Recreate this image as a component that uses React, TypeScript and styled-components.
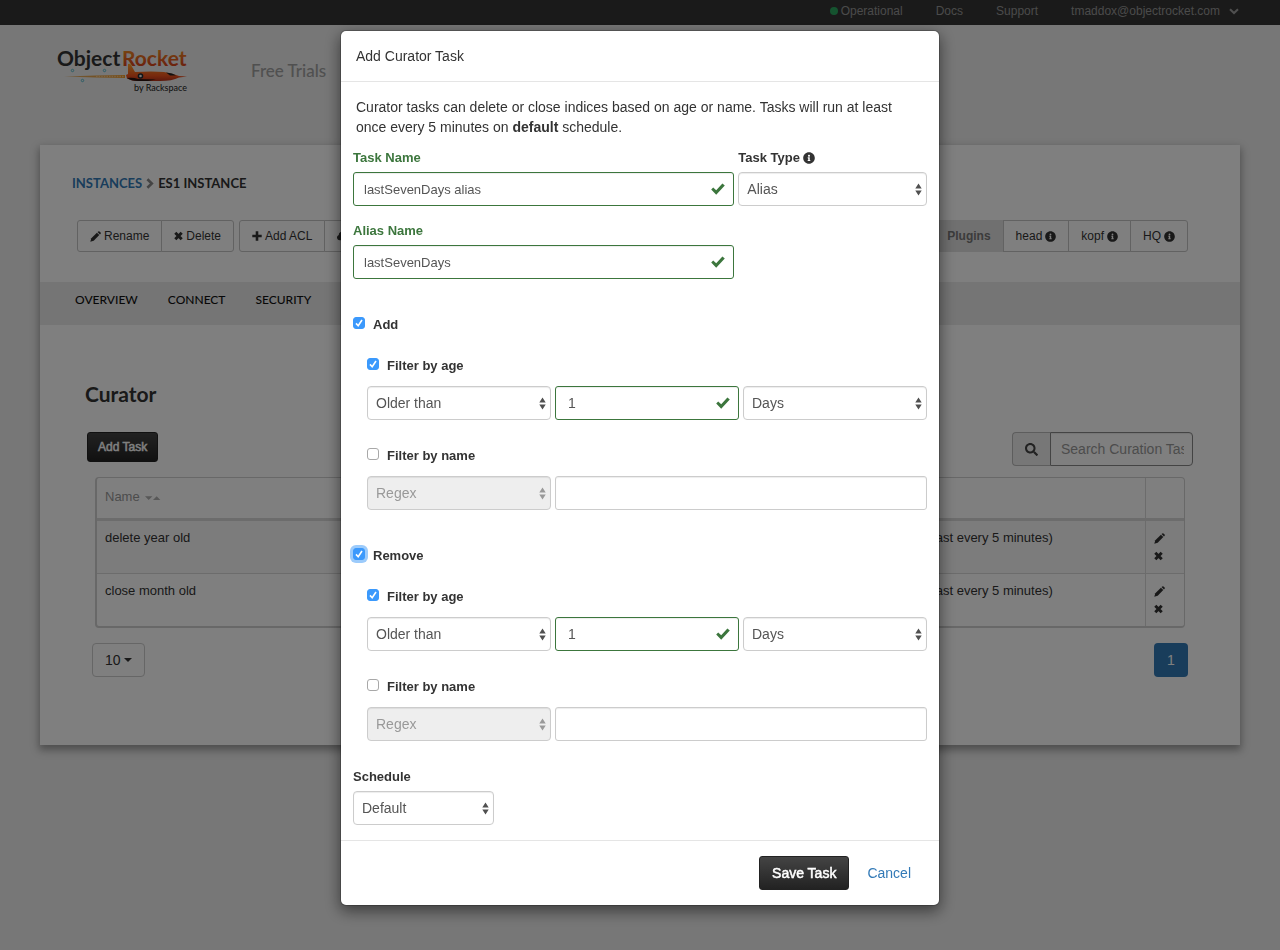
import React, { useId, useState } from "react";
import styled, { createGlobalStyle, css } from "styled-components";
import { FaCloud, FaInfoCircle, FaSearch } from "react-icons/fa";

const sans = `"Liberation Sans", Arial, Helvetica, sans-serif`;
const display = `Lato, "Noto Sans", sans-serif`;
const green = "#3c763d";

const GlobalStyle = createGlobalStyle`
  *, *::before, *::after { box-sizing: border-box; }
  html { background: #eeeeee; }
  body {
    margin: 0;
    font-family: ${sans};
    font-size: 14px;
    line-height: 20px;
    color: #333;
  }
  button, input, select { font-family: inherit; }
`;

/* ---------- Icons ---------- */

const OkIcon = () => (
  <svg width="14" height="12" viewBox="0 0 14 12" fill="currentColor" aria-hidden="true">
    <path d="M0.2 6.6 2.2 4.6 5.2 7.2 11.4 0.4 13.8 2.6 5.2 11.8Z" />
  </svg>
);

const PencilIcon = () => (
  <svg width="11" height="11" viewBox="0 0 11 11" fill="currentColor" aria-hidden="true">
    <path d="M6.9 1.7 9.3 4.1 3.7 9.7 0.3 10.7 1.3 7.3Z" />
    <path d="M7.5 1.100 8.300 0.400Q8.900 0 9.500 0.400L10.600 1.500Q11 2.100 10.700 2.700L9.900 3.500Z" />
  </svg>
);

const RemoveIcon = () => (
  <svg width="9" height="10" viewBox="0 0 9 10" aria-hidden="true">
    <path d="M1.300 1.800 7.700 8.200M7.700 1.800 1.300 8.200" stroke="currentColor" strokeWidth="3" />
  </svg>
);

const PlusIcon = () => (
  <svg width="10" height="10" viewBox="0 0 10 10" aria-hidden="true">
    <path d="M5 0.3V9.7M0.3 5H9.7" stroke="currentColor" strokeWidth="2.6" />
  </svg>
);

const ChevronRight = () => (
  <svg width="8" height="11" viewBox="0 0 8 11" fill="none" aria-hidden="true">
    <path d="M1.4 1.2 5.8 5.5 1.4 9.8" stroke="#888" strokeWidth="2.6" />
  </svg>
);

const ChevronDown = () => (
  <svg width="10" height="7" viewBox="0 0 10 7" fill="none" aria-hidden="true">
    <path d="M1 1.2 5 5 9 1.2" stroke="#a0a0a0" strokeWidth="2" />
  </svg>
);

const UpDown = () => (
  <svg width="7" height="13" viewBox="0 0 7 13" fill="currentColor" aria-hidden="true">
    <path d="M3.5 0.4 6.7 5.4H0.3ZM3.5 12.6 0.3 7.6H6.7Z" />
  </svg>
);

const SortIcon = () => (
  <svg width="18" height="6" viewBox="-2 0 18 6" fill="#b0b0b0" aria-hidden="true">
    <path d="M0 1.2H7.4L3.7 5ZM8 5H15.4L11.7 1.2Z" />
  </svg>
);

const Caret = () => (
  <svg width="8" height="4" viewBox="0 0 8 4" fill="currentColor" aria-hidden="true">
    <path d="M0 0H8L4 4Z" />
  </svg>
);

const Logo = () => (
  <svg width="140" height="56" viewBox="0 -6 140 56" role="img" aria-label="ObjectRocket by Rackspace">
    <defs>
      <linearGradient id="word" x1="0" y1="0" x2="0" y2="1">
        <stop offset="0.2" stopColor="#f08a24" />
        <stop offset="0.8" stopColor="#d9481c" />
      </linearGradient>
      <linearGradient id="hull" x1="0" y1="0" x2="0" y2="1">
        <stop offset="0" stopColor="#ffa62e" />
        <stop offset="0.7" stopColor="#f0521c" />
        <stop offset="1" stopColor="#b8321a" />
      </linearGradient>
      <linearGradient id="flame" x1="0" y1="0" x2="1" y2="0">
        <stop offset="0" stopColor="#d98a20" stopOpacity="0.6" />
        <stop offset="1" stopColor="#f29a26" />
      </linearGradient>
    </defs>
    <text x="1" y="20" fontFamily={display} fontSize="21" fontWeight="700" fill="#333">
      Object
    </text>
    <text x="66" y="20" fontFamily={display} fontSize="21" fontWeight="700" fill="url(#word)">
      Rocket
    </text>
    <path d="M8 30.500 40 29.500 69 29V32L40 31.500Z" fill="url(#flame)" />
    <path d="M40 30.500H68" stroke="#f6c98b" strokeWidth="1.4" strokeDasharray="1.6 1" />
    <path
      d="M72 18Q74 17 75 19L79 26Q96 25 108 26Q118 28 123 30L131 30.500 123 31.500Q116 35 104 35H82Q76 35 71 32.500L70 29 72 28Z"
      fill="url(#hull)"
    />
    <path d="M110 26.500Q117 27 120 29.500H114Z" fill="#222" />
    <path d="M71 32Q77 31 82 33L100 33.500 92 35H82Q75 35 71 32Z" fill="#2b1510" />
    <circle cx="84.500" cy="30" r="2.800" fill="#1d2b33" />
    <circle cx="84.500" cy="30" r="1.300" fill="#f3efe6" />
    <g fill="none" stroke="#4bb6c9" strokeWidth="0.900">
      <circle cx="16.500" cy="24.500" r="1.200" />
      <circle cx="48.500" cy="24.500" r="1.200" />
      <circle cx="26.500" cy="34.500" r="1.200" />
    </g>
    <text x="131" y="45" textAnchor="end" fontFamily={display} fontSize="9" fill="#222">
      by Rackspace
    </text>
  </svg>
);

/* ---------- Page behind the dialog ---------- */

const TopBar = styled.nav`
  display: flex;
  justify-content: flex-end;
  gap: 33px;
  height: 25px;
  padding: 1px 41px 0 0;
  background: #353535;
`;

const TopLink = styled.a`
  display: flex;
  align-items: center;
  gap: 3px;
  height: 20px;
  font-size: 12px;
  color: #969696;
  text-decoration: none;
`;

const StatusDot = styled.span`
  width: 8px;
  height: 8px;
  border-radius: 50%;
  background: #2ba75f;
`;

const AccountName = styled.span`
  margin-right: 6px;
`;

const SiteHeader = styled.header`
  display: flex;
  align-items: flex-start;
  gap: 55px;
  height: 120px;
  padding: 15px 56px 0;
`;

const HeaderLink = styled.a`
  padding-top: 21px;
  font-family: ${display};
  font-size: 17px;
  font-weight: 500;
  color: #a0a0a0;
  text-decoration: none;
`;

const Card = styled.main`
  margin: 0 40px 40px;
  padding: 28px 0 68px;
  background: #fff;
  box-shadow: 0 4px 8px 1px rgba(0, 0, 0, 0.35);
`;

const Breadcrumb = styled.nav`
  display: flex;
  align-items: center;
  gap: 4px;
  padding: 0 32px;
  font-family: ${display};
  font-size: 13px;
  font-weight: 700;
  color: #333;
`;

const CrumbLink = styled.a`
  color: #337ab7;
  text-decoration: none;
`;

const Toolbar = styled.div`
  display: flex;
  gap: 5px;
  padding: 27px 52px 30px 37px;
`;

const ButtonGroup = styled.div<{ $end?: boolean }>`
  display: flex;
  ${(p) => p.$end && "margin-left: auto;"}
`;

const GroupButton = styled.button<{ $label?: boolean }>`
  display: flex;
  align-items: center;
  gap: 3px;
  height: 32px;
  padding: 0 12px;
  margin-left: -1px;
  border: 1px solid #c4c4c4;
  background: #fff;
  font-size: 12px;
  color: #333;

  &:first-child {
    margin-left: 0;
    border-radius: 3px 0 0 3px;
  }
  &:last-child {
    border-radius: 0 3px 3px 0;
  }
  ${(p) =>
    p.$label &&
    css`
      border-color: #e0e0e0;
      background: #e0e0e0;
      font-weight: 700;
      color: #777;
    `}
`;

const TabBar = styled.nav`
  display: flex;
  align-items: center;
  gap: 30px;
  height: 43px;
  padding: 0 35px 8px;
  background: #eaeaea;
`;

const Tab = styled.a`
  font-family: ${display};
  font-size: 12px;
  font-weight: 500;
  color: #111;
  text-decoration: none;
`;

const SectionTitle = styled.h1`
  margin: 0;
  padding: 56px 45px 25px;
  font-family: ${display};
  font-size: 21px;
  line-height: 26px;
  font-weight: 700;
`;

const SplitRow = styled.div`
  display: flex;
  align-items: flex-start;
  justify-content: space-between;
  padding: 0 47px;
`;

const DarkButton = styled.button<{ $small?: boolean }>`
  height: ${(p) => (p.$small ? 30 : 34)}px;
  padding: 0 ${(p) => (p.$small ? 10 : 12)}px;
  border: 1px solid #222;
  border-radius: 3px;
  background: linear-gradient(#444, #222);
  font-size: ${(p) => (p.$small ? 12 : 14)}px;
  color: #fff;
  -webkit-text-stroke: 0.5px #fff;
`;

const SearchGroup = styled.label`
  display: flex;
  height: 34px;
`;

const SearchAddon = styled.span`
  display: flex;
  align-items: center;
  padding: 0 12px;
  border: 1px solid #bbb;
  border-right: 0;
  border-radius: 4px 0 0 4px;
  background: #eee;
  color: #444;
`;

const SearchInput = styled.input`
  width: 143px;
  padding: 0 8px 0 10px;
  border: 1px solid #888;
  border-radius: 0 4px 4px 0;
  font-size: 14px;
  box-shadow: inset 0 1px 1px rgba(0, 0, 0, 0.08);

  &::placeholder {
    color: #999;
    opacity: 1;
  }
`;

const TableFrame = styled.div`
  margin: 11px 55px 15px;
  border: 1px solid #d0d0d0;
  border-left-width: 2px;
  border-bottom-width: 2px;
  border-radius: 4px;
`;

const TaskTable = styled.table`
  width: 100%;
  border-collapse: separate;
  border-spacing: 0;
  table-layout: fixed;
  font-size: 13px;
  line-height: 18px;

  th {
    height: 43px;
    padding: 0 8px 2px;
    border-bottom: 3px solid #d8d8d8;
    font-weight: 400;
    text-align: left;
    color: #999;
  }
  td {
    padding: 8px;
    border-bottom: 1px solid #d8d8d8;
    vertical-align: top;
  }
  tbody tr:first-child td {
    background: #f9f9f9;
  }
  tbody tr:last-child td {
    border-bottom: 0;
  }
  th:last-child,
  td:last-child {
    border-left: 1px solid #d8d8d8;
  }
`;

const ColSchedule = styled.col`
  width: 291px;
`;

const ColActions = styled.col`
  width: 39px;
`;

const IconButton = styled.button`
  display: flex;
  align-items: center;
  height: 18px;
  padding: 0;
  border: 0;
  background: none;
  color: #333;
`;

const PagerRow = styled.div`
  display: flex;
  justify-content: space-between;
  padding: 0 52px;
`;

const PageSize = styled.button`
  display: flex;
  align-items: center;
  gap: 3px;
  height: 34px;
  padding: 0 12px;
  border: 1px solid #ccc;
  border-radius: 4px;
  background: #fff;
  font-size: 14px;
  color: #333;
`;

const PageNumber = styled.a`
  width: 34px;
  border-radius: 4px;
  background: #337ab7;
  line-height: 34px;
  text-align: center;
  color: #fff;
  text-decoration: none;
`;

/* ---------- Dialog ---------- */

const Backdrop = styled.div`
  position: fixed;
  inset: 0;
  display: flex;
  align-items: flex-start;
  justify-content: center;
  padding: 30px 10px;
  overflow: auto;
  background: rgba(0, 0, 0, 0.5);
`;

const Dialog = styled.form`
  width: 100%;
  max-width: 600px;
  border: 1px solid rgba(0, 0, 0, 0.2);
  border-radius: 6px;
  background: #fff;
  background-clip: padding-box;
  box-shadow: 0 5px 15px rgba(0, 0, 0, 0.5);
`;

const DialogTitle = styled.h2`
  margin: 0;
  padding: 15px;
  border-bottom: 1px solid #e5e5e5;
  font-size: 14px;
  line-height: 20px;
  font-weight: 400;
`;

const DialogBody = styled.div`
  padding: 15px 12px;
`;

const Intro = styled.p`
  margin: 0;
  padding: 0 3px 10px;
`;

const Columns = styled.div<{ $count?: number }>`
  display: grid;
  grid-template-columns: repeat(${(p) => p.$count ?? 3}, minmax(0, 1fr));
  gap: 14px 4px;
`;

const Field = styled.div<{ $wide?: boolean }>`
  display: flex;
  flex-direction: column;
  gap: 3px;
  ${(p) => p.$wide && "grid-column: 1 / span 2;"}
`;

const FieldLabel = styled.label<{ $valid?: boolean }>`
  display: flex;
  align-items: center;
  gap: 3px;
  font-size: 13px;
  line-height: 22px;
  font-weight: 700;
  color: ${(p) => (p.$valid ? green : "#333")};
`;

const ControlBox = styled.div<{ $wide?: boolean }>`
  position: relative;
  ${(p) => p.$wide && "grid-column: span 2;"}
`;

const control = css`
  display: block;
  width: 100%;
  height: 34px;
  border: 1px solid #ccc;
  background: #fff;
  color: #555;
  box-shadow: inset 0 1px 1px rgba(0, 0, 0, 0.075);
`;

const TextInput = styled.input<{ $valid?: boolean; $compact?: boolean }>`
  ${control}
  padding: 0 ${(p) => (p.$compact ? 10 : 12)}px;
  border-radius: 3px;
  border-color: ${(p) => (p.$valid ? green : "#ccc")};
  font-size: ${(p) => (p.$compact ? 13 : 14)}px;
`;

const Select = styled.select`
  ${control}
  appearance: none;
  padding: 0 20px 0 8px;
  border-radius: 4px;
  font-size: 14px;

  &:disabled {
    background: #eee;
    color: #999;
    opacity: 1;
  }
`;

const Adornment = styled.span<{ $tone: string; $right: number }>`
  position: absolute;
  top: 0;
  right: ${(p) => p.$right}px;
  display: flex;
  align-items: center;
  height: 34px;
  color: ${(p) => p.$tone};
  pointer-events: none;
`;

const Group = styled.section`
  padding-top: 35px;
`;

const Filter = styled.div`
  display: flex;
  flex-direction: column;
  gap: 9px;
  padding: 19px 0 0 14px;

  & + & {
    padding-top: 25px;
  }
`;

const CheckLabel = styled.label`
  display: flex;
  align-items: flex-start;
  gap: 8px;
  font-size: 13px;
  line-height: 22px;
  font-weight: 700;
`;

const CheckBox = styled.span`
  display: grid;
  width: 12px;
  height: 12px;
  margin-top: 3px;

  & > * {
    grid-area: 1 / 1;
  }
  svg {
    pointer-events: none;
  }
`;

const CheckInput = styled.input<{ $ring?: boolean }>`
  appearance: none;
  width: 12px;
  height: 12px;
  margin: 0;
  border: 1px solid #a8a8a8;
  border-radius: 3px;
  background: #fff;

  &:checked {
    border-color: #3b99fc;
    background: #3b99fc;
  }
  ${(p) => p.$ring && "box-shadow: 0 0 0 3px #9ccbfb;"}
`;

const ScheduleGroup = styled.div`
  padding-top: 25px;
`;

const DialogFooter = styled.footer`
  display: flex;
  justify-content: flex-end;
  gap: 5px;
  padding: 15px;
  border-top: 1px solid #e5e5e5;
`;

const LinkButton = styled.button`
  height: 34px;
  padding: 0 12px;
  border: 1px solid transparent;
  background: none;
  font-size: 14px;
  color: #337ab7;
`;

/* ---------- Composed controls ---------- */

type DropDownProps = { id?: string; label?: string; options: string[]; disabled?: boolean };

const DropDown = ({ id, label, options, disabled }: DropDownProps) => (
  <ControlBox>
    <Select id={id} aria-label={label} disabled={disabled}>
      {options.map((o) => (
        <option key={o}>{o}</option>
      ))}
    </Select>
    <Adornment $tone={disabled ? "#999" : "#505050"} $right={5}>
      <UpDown />
    </Adornment>
  </ControlBox>
);

type ValidInputProps = { id?: string; label?: string; value: string; compact?: boolean };

const ValidInput = ({ id, label, value, compact }: ValidInputProps) => (
  <ControlBox>
    <TextInput id={id} aria-label={label} defaultValue={value} $valid $compact={compact} />
    <Adornment $tone={green} $right={9}>
      <OkIcon />
    </Adornment>
  </ControlBox>
);

type CheckProps = { label: string; initial?: boolean; ring?: boolean; onToggle?: (v: boolean) => void };

const Check = ({ label, initial = false, ring, onToggle }: CheckProps) => {
  const [on, setOn] = useState(initial);
  return (
    <CheckLabel>
      <CheckBox>
        <CheckInput
          type="checkbox"
          checked={on}
          $ring={ring}
          onChange={(e) => {
            setOn(e.target.checked);
            onToggle?.(e.target.checked);
          }}
        />
        {on && (
          <svg width="12" height="12" viewBox="0 0 12 12" fill="none" aria-hidden="true">
            <path d="M3 6.400 5.200 8.800 9 3" stroke="#fff" strokeWidth="1.600" />
          </svg>
        )}
      </CheckBox>
      {label}
    </CheckLabel>
  );
};

const FilterGroup = ({ title, ring }: { title: string; ring?: boolean }) => {
  const [byName, setByName] = useState(false);
  return (
    <Group>
      <Check label={title} initial ring={ring} />
      <Filter>
        <Check label="Filter by age" initial />
        <Columns>
          <DropDown label={`${title} age comparison`} options={["Older than", "Younger than"]} />
          <ValidInput label={`${title} age`} value="1" />
          <DropDown label={`${title} age unit`} options={["Days", "Weeks", "Months"]} />
        </Columns>
      </Filter>
      <Filter>
        <Check label="Filter by name" onToggle={setByName} />
        <Columns>
          <DropDown label={`${title} name match`} options={["Regex", "Prefix"]} disabled={!byName} />
          <ControlBox $wide>
            <TextInput aria-label={`${title} name pattern`} />
          </ControlBox>
        </Columns>
      </Filter>
    </Group>
  );
};

const tasks = ["delete year old", "close month old"];
const plugins = ["head", "kopf", "HQ"];

export default function App() {
  const id = useId();
  return (
    <>
      <GlobalStyle />
      <TopBar>
        <TopLink href="#status">
          <StatusDot />
          Operational
        </TopLink>
        <TopLink href="#docs">Docs</TopLink>
        <TopLink href="#support">Support</TopLink>
        <TopLink href="#account">
          <AccountName>tmaddox@objectrocket.com</AccountName>
          <ChevronDown />
        </TopLink>
      </TopBar>
      <SiteHeader>
        <Logo />
        <HeaderLink href="#trials">Free Trials</HeaderLink>
      </SiteHeader>
      <Card>
        <Breadcrumb>
          <CrumbLink href="#instances">INSTANCES</CrumbLink>
          <ChevronRight />
          <span>ES1 INSTANCE</span>
        </Breadcrumb>
        <Toolbar>
          <ButtonGroup>
            <GroupButton>
              <PencilIcon />
              Rename
            </GroupButton>
            <GroupButton>
              <RemoveIcon />
              Delete
            </GroupButton>
          </ButtonGroup>
          <ButtonGroup>
            <GroupButton>
              <PlusIcon />
              Add ACL
            </GroupButton>
            <GroupButton aria-label="Cloud">
              <FaCloud size={12} />
            </GroupButton>
          </ButtonGroup>
          <ButtonGroup $end>
            <GroupButton $label disabled>
              Plugins
            </GroupButton>
            {plugins.map((p) => (
              <GroupButton key={p}>
                {p}
                <FaInfoCircle size={11} />
              </GroupButton>
            ))}
          </ButtonGroup>
        </Toolbar>
        <TabBar>
          <Tab href="#overview">OVERVIEW</Tab>
          <Tab href="#connect">CONNECT</Tab>
          <Tab href="#security">SECURITY</Tab>
        </TabBar>
        <SectionTitle>Curator</SectionTitle>
        <SplitRow>
          <DarkButton $small>Add Task</DarkButton>
          <SearchGroup>
            <SearchAddon>
              <FaSearch size={13} />
            </SearchAddon>
            <SearchInput aria-label="Search" placeholder="Search Curation Tasks" />
          </SearchGroup>
        </SplitRow>
        <TableFrame>
          <TaskTable>
            <colgroup>
              <col />
              <ColSchedule />
              <ColActions />
            </colgroup>
            <thead>
              <tr>
                <th>
                  Name <SortIcon />
                </th>
                <th />
                <th />
              </tr>
            </thead>
            <tbody>
              {tasks.map((t) => (
                <tr key={t}>
                  <td>{t}</td>
                  <td>Default (at least every 5 minutes)</td>
                  <td>
                    <IconButton aria-label={`Edit ${t}`}>
                      <PencilIcon />
                    </IconButton>
                    <IconButton aria-label={`Remove ${t}`}>
                      <RemoveIcon />
                    </IconButton>
                  </td>
                </tr>
              ))}
            </tbody>
          </TaskTable>
        </TableFrame>
        <PagerRow>
          <PageSize>
            10
            <Caret />
          </PageSize>
          <PageNumber href="#page-1">1</PageNumber>
        </PagerRow>
      </Card>

      <Backdrop>
        <Dialog role="dialog" aria-modal="true" aria-labelledby={`${id}-title`} onSubmit={(e) => e.preventDefault()}>
          <DialogTitle id={`${id}-title`}>Add Curator Task</DialogTitle>
          <DialogBody>
            <Intro>
              Curator tasks can delete or close indices based on age or name. Tasks will run at least once every 5
              minutes on <strong>default</strong> schedule.
            </Intro>
            <Columns>
              <Field $wide>
                <FieldLabel htmlFor={`${id}-name`} $valid>
                  Task Name
                </FieldLabel>
                <ValidInput id={`${id}-name`} value="lastSevenDays alias" compact />
              </Field>
              <Field>
                <FieldLabel htmlFor={`${id}-type`}>
                  Task Type
                  <FaInfoCircle size={12} />
                </FieldLabel>
                <DropDown id={`${id}-type`} options={["Alias", "Delete", "Close"]} />
              </Field>
              <Field $wide>
                <FieldLabel htmlFor={`${id}-alias`} $valid>
                  Alias Name
                </FieldLabel>
                <ValidInput id={`${id}-alias`} value="lastSevenDays" compact />
              </Field>
            </Columns>
            <FilterGroup title="Add" />
            <FilterGroup title="Remove" ring />
            <ScheduleGroup>
              <Columns $count={4}>
                <Field>
                  <FieldLabel htmlFor={`${id}-schedule`}>Schedule</FieldLabel>
                  <DropDown id={`${id}-schedule`} options={["Default", "Custom"]} />
                </Field>
              </Columns>
            </ScheduleGroup>
          </DialogBody>
          <DialogFooter>
            <DarkButton type="submit">Save Task</DarkButton>
            <LinkButton type="button">Cancel</LinkButton>
          </DialogFooter>
        </Dialog>
      </Backdrop>
    </>
  );
}
